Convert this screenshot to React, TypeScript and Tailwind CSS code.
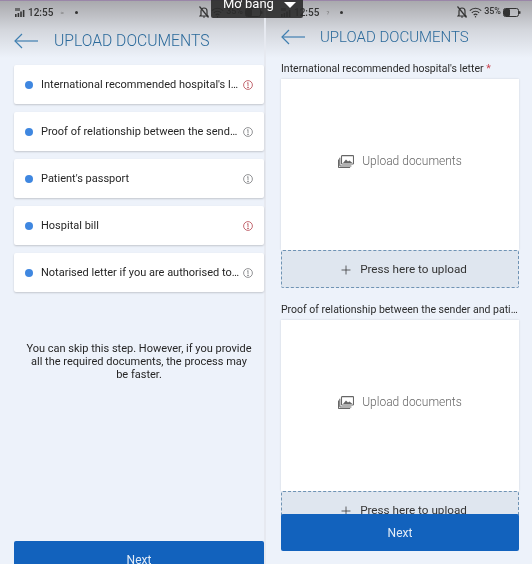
import { Plus } from "lucide-react";

const DOCUMENTS = [
  { name: "International recommended hospital's letter", required: true },
  { name: "Proof of relationship between the sender and patient", required: false },
  { name: "Patient's passport", required: false },
  { name: "Hospital bill", required: true },
  { name: "Notarised letter if you are authorised to act for the patient", required: false },
];

const SignalIcon = () => (
  <svg width="11" height="9" viewBox="0 0 11 9" fill="#333">
    <rect x="0" y="6" width="1.6" height="3" />
    <rect x="2.6" y="5" width="1.6" height="4" />
    <rect x="5.2" y="3.5" width="1.6" height="5.5" />
    <rect x="7.8" y="2" width="1.6" height="7" />
    <rect x="0" y="0" width="5" height="3" opacity="0.6" />
  </svg>
);

const BellOffIcon = () => (
  <svg width="10" height="12" viewBox="0 0 10 12" fill="none" stroke="#333" strokeWidth="1.2">
    <path d="M2 9V5a3 3 0 0 1 6 0v4l1 1H1z" />
    <path d="M4 11h2" />
    <path d="M0.5 0.5l9 11" />
  </svg>
);

const WifiIcon = () => (
  <svg width="13" height="11" viewBox="0 0 13 11" fill="none" stroke="#333" strokeWidth="1.1">
    <path d="M0.8 3.6a8 8 0 0 1 11.4 0" />
    <path d="M2.8 5.8a5.2 5.2 0 0 1 7.4 0" />
    <path d="M4.7 8a2.6 2.6 0 0 1 3.6 0" />
    <circle cx="6.5" cy="9.8" r="0.7" fill="#333" stroke="none" />
  </svg>
);

const BatteryIcon = () => (
  <svg width="18" height="9" viewBox="0 0 18 9">
    <rect x="0.5" y="0.5" width="15" height="8" rx="2" fill="none" stroke="#333" />
    <rect x="1" y="1" width="6" height="7" rx="1" fill="#333" />
    <rect x="16" y="3" width="1.5" height="3" rx="0.7" fill="#333" />
  </svg>
);

const BackArrow = () => (
  <svg width="24" height="16" viewBox="0 0 24 16" fill="none" stroke="#3f7fb0" strokeWidth="1.2">
    <path d="M24 8H1" />
    <path d="M8 1L1 8l7 7" />
  </svg>
);

const InfoIcon = ({ red }: { red: boolean }) => (
  <svg width="10" height="10" viewBox="0 0 10 10" fill="none" stroke={red ? "#b5454f" : "#77797c"} strokeWidth="0.8">
    <circle cx="5" cy="5" r="4.4" />
    <path d="M5 2.4v3.8M4 7.4h2M4.2 3h0.8" />
  </svg>
);

const PicturesIcon = () => (
  <svg width="16" height="13" viewBox="0 0 16 13" fill="none" stroke="#666" strokeWidth="1.1">
    <rect x="3.5" y="0.6" width="12" height="8.4" rx="0.6" />
    <path d="M1.8 2.8v7.6a0.6 0.6 0 0 0 .6 .6h11" />
    <path d="M0.5 4.5v7.4a0.6 0.6 0 0 0 .6 .6h11" />
    <path d="M5 8l3-3.6 2 2.2 1.4-1.2L14.5 8z" fill="#666" stroke="none" />
  </svg>
);

const StatusBar = ({ right }: { right?: boolean }) => (
  <div className={right ? "flex h-[22px] items-center justify-between pl-[15px] pr-[11px]" : "flex h-[22px] items-center justify-between pl-[15px] pr-[1px]"}>
    <div className="flex items-center gap-[2px]">
      <SignalIcon />
      <span className="text-[10px] font-medium text-[#333]">12:55</span>
      <span className="ml-[5px] text-[6px] text-[#777]">{right ? "?" : "\u2248"}</span>
      <span className="ml-[9px] h-[3px] w-[3px] rounded-full bg-[#333]" />
    </div>
    <div className="flex items-center gap-[2px]">
      <BellOffIcon />
      <WifiIcon />
      <span className="text-[9px] font-medium text-[#333]">35%</span>
      <BatteryIcon />
    </div>
  </div>
);

const Header = ({ right }: { right?: boolean }) => (
  <div className="h-[58px] border-t border-[#9a86a8] bg-gradient-to-b from-[#a9a9ad] via-[#d3d6dc] via-50% to-[#edf2fa]">
    <StatusBar right={right} />
    <div className={right ? "flex items-center gap-[15px] pl-[15px] pt-[3px]" : "flex items-center gap-[16px] pl-[14px] pt-[6px]"}>
      <BackArrow />
      <h1
        className={
          right
            ? "text-[15px] font-light leading-[22px] text-[#2b6a9b]"
            : "text-[15.7px] font-light leading-[24px] text-[#2b6a9b]"
        }
      >
        UPLOAD DOCUMENTS
      </h1>
    </div>
  </div>
);

const UploadBlock = ({ label, required }: { label: string; required?: boolean }) => (
  <div>
    <p className="h-[21px] truncate text-[10.5px] leading-[21px] text-[#2b2b2b]">
      {label}
      {required && <span className="text-[#c9404c]"> *</span>}
    </p>
    <div className="flex h-[171px] items-center justify-center gap-[8px] bg-white pb-[7px] shadow-[0_0_2px_rgba(0,0,0,0.12)]">
      <PicturesIcon />
      <span className="text-[12px] font-light text-[#666]">Upload documents</span>
    </div>
    <div className="flex h-[38px] items-center justify-center gap-[7px] rounded-[2px] border border-dashed border-[#6f93b4] bg-[#dfe6ef] pl-[6px] pt-[1px]">
      <Plus size={14} strokeWidth={1.3} className="text-[#333]" />
      <span className="text-[11.7px] text-[#333]">Press here to upload</span>
    </div>
  </div>
);

export default function App() {
  return (
    <div className="relative flex h-[564px] w-[532px] overflow-hidden bg-[#edf2fa] blur-[0.4px] [font-family:Roboto,sans-serif]">
      <div className="h-full w-[266px] shrink-0 border-r-[2px] border-[#e6e9f0]">
        <Header />
        <ul className="mt-[7px] flex flex-col gap-[8px] pl-[14px]">
          {DOCUMENTS.map((doc) => (
            <li
              key={doc.name}
              className="flex h-[39px] items-center rounded-[2px] bg-white pl-[11px] pr-[11px] shadow-[0_1px_2px_rgba(0,0,0,0.18)]"
            >
              <span className="h-[8px] w-[8px] shrink-0 rounded-full bg-[#3f87e0]" />
              <span className="ml-[8px] min-w-0 flex-1 truncate pr-[3px] pt-[2px] text-[11px] text-[#262626]">{doc.name}</span>
              <InfoIcon red={doc.required} />
            </li>
          ))}
        </ul>
        <p className="ml-[26px] mt-[50px] w-[226px] text-center text-[11px] leading-[13px] text-[#262626]">
          You can skip this step. However, if you provide all the required documents, the process may be faster.
        </p>
        <button className="ml-[14px] mt-[160px] h-[38px] w-[250px] rounded-[2px] bg-[#1262bd] text-[12px] text-[#e3ecf7]">
          Next
        </button>
      </div>

      <div className="relative h-full flex-1 overflow-hidden">
        <Header right />
        <div className="flex flex-col gap-[11px] pl-[15px] pr-[13px]">
          <UploadBlock label="International recommended hospital's letter" required />
          <UploadBlock label="Proof of relationship between the sender and patient" />
        </div>
        <button className="absolute left-[15px] top-[514px] h-[37px] w-[238px] rounded-[2px] bg-[#1262bd] text-[12px] text-[#e3ecf7]">
          Next
        </button>
      </div>

      <div className="absolute left-[211px] top-0 flex h-[18px] w-[92px] items-start gap-[10px] overflow-hidden rounded-b-[2px] bg-[#2b2b2b]/90 pl-[12px]">
        <span className="-mt-[4px] text-[13px] leading-[15px] text-white">Mở bảng</span>
        <span className="mt-[2px] h-0 w-0 border-x-[6px] border-t-[6px] border-x-transparent border-t-white" />
      </div>
    </div>
  );
}
